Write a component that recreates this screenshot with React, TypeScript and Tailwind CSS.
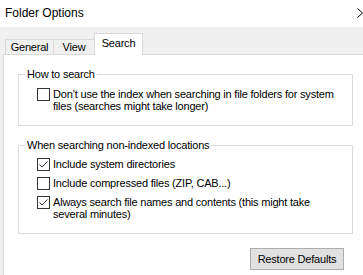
const font = { fontFamily: '"Liberation Sans", Arial, sans-serif' }

function Check({ checked }: { checked?: boolean }) {
  return (
    <span className="w-[13px] h-[13px] shrink-0 border border-[#333333] bg-white flex items-center justify-center mt-[1px]">
      {checked && (
        <svg width="11" height="11" viewBox="0 0 11 11">
          <path d="M1.5 5.5 L4 8 L9.5 2.5" fill="none" stroke="#333333" strokeWidth="1" />
        </svg>
      )}
    </span>
  )
}

function Option({ label, checked }: { label: string; checked?: boolean }) {
  return (
    <div className="flex items-start gap-[3px]">
      <Check checked={checked} />
      <span className="leading-[12px] pt-[1px] pr-[10px]">{label}</span>
    </div>
  )
}

function Group({ title, pt, pb, children }: { title: string; pt: string; pb: string; children: React.ReactNode }) {
  return (
    <fieldset className="border border-[#dcdcdc] ml-[14px] mr-[10px] p-0">
      <legend className="ml-[6px] px-[2px] leading-[14px]">{title}</legend>
      <div className={`pl-[18px] ${pt} ${pb}`}>{children}</div>
    </fieldset>
  )
}

export default function App() {
  return (
    <div className="w-[363px] h-[275px] overflow-hidden flex flex-col bg-white text-[11px] tracking-[-0.2px] text-black" style={font}>
      <div className="h-[27px] shrink-0 flex items-center justify-between pl-[5px]">
        <span className="text-[12px] tracking-normal mt-[-1px]">Folder Options</span>
        <svg width="6" height="10" viewBox="0 0 6 10" className="mt-[-1px]">
          <path d="M0.5 0.5 L5.5 5 L0.5 9.5" fill="none" stroke="#000" strokeWidth="1" />
        </svg>
      </div>
      <div className="flex-1 bg-[#f0f0f0] flex flex-col pl-[3px]">
        <div className="h-[27px] shrink-0 flex items-end pl-[2px]">
          <div className="h-[16px] w-[48px] border border-[#d9d9d9] border-r-0 flex items-center justify-center mb-[-1px]">General</div>
          <div className="h-[16px] w-[41px] border border-[#d9d9d9] border-r-0 flex items-center justify-center mb-[-1px]">View</div>
          <div className="h-[22px] w-[49px] border border-[#d9d9d9] border-b-0 bg-white flex items-center justify-center mb-[-1px] relative z-10 pb-[2px]">Search</div>
        </div>
        <div className="flex-1 bg-white border-l border-t border-[#d9d9d9] flex flex-col pt-[12px]">
          <Group title="How to search" pt="pt-[6px]" pb="pb-[13px]">
            <Option label="Don’t use the index when searching in file folders for system files (searches might take longer)" />
          </Group>
          <div className="h-[12px] shrink-0" />
          <Group title="When searching non-indexed locations" pt="pt-[5px]" pb="pb-[13px]">
            <div className="flex flex-col gap-[5px]">
              <Option label="Include system directories" checked />
              <Option label="Include compressed files (ZIP, CAB...)" />
              <Option label="Always search file names and contents (this might take several minutes)" checked />
            </div>
          </Group>
          <div className="flex justify-end pr-[19px] mt-[14px]">
            <button className="w-[94px] h-[22px] bg-[#e1e1e1] border border-[#adadad] text-[11px] tracking-[-0.2px]">Restore Defaults</button>
          </div>
        </div>
      </div>
    </div>
  )
}
